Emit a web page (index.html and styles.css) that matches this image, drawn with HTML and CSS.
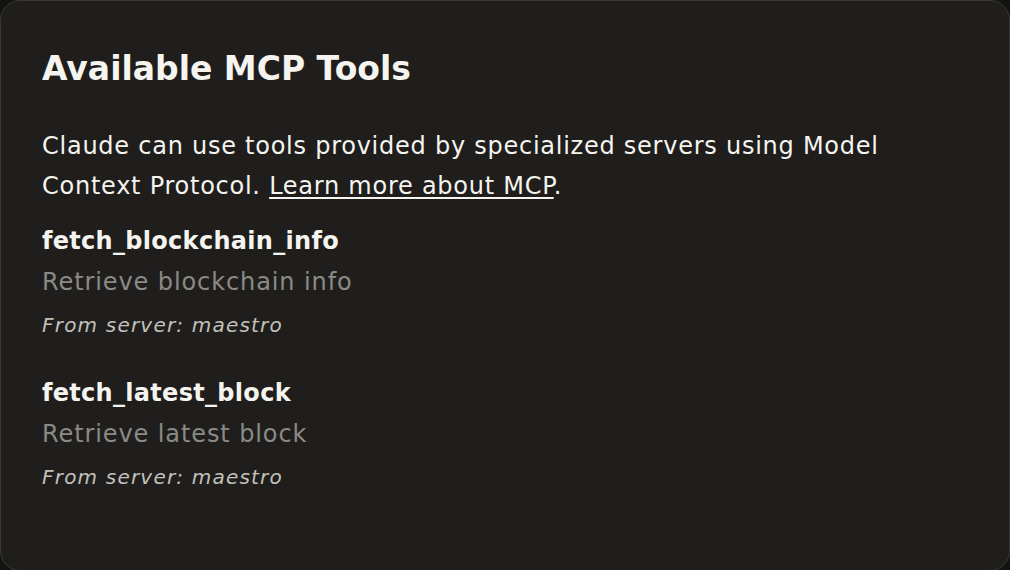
FILE: index.html
```html
<!DOCTYPE html>
<html lang="en">
<head>
    <meta charset="UTF-8">
    <meta name="viewport" content="width=device-width, initial-scale=1.0">
    <title>Available MCP Tools</title>
    <link rel="stylesheet" href="styles.css">
</head>
<body>
    <div class="dialog">
        <h1 class="title">Available MCP Tools</h1>
        <p class="intro">
            Claude can use tools provided by specialized servers using Model
            Context Protocol. <a href="#" class="link">Learn more about MCP</a>.
        </p>

        <ul class="tools">
            <li class="tool">
                <div class="tool-name">fetch_blockchain_info</div>
                <div class="tool-desc">Retrieve blockchain info</div>
                <div class="tool-server">From server: maestro</div>
            </li>
            <li class="tool">
                <div class="tool-name">fetch_latest_block</div>
                <div class="tool-desc">Retrieve latest block</div>
                <div class="tool-server">From server: maestro</div>
            </li>
        </ul>
    </div>
</body>
</html>
```

FILE: styles.css
```css
html, body {
    margin: 0;
    padding: 0;
    height: 100%;
}

body {
    font-family: "DejaVu Sans", "Noto Sans", sans-serif;
    background-color: #131312;
    color: #f5f4ef;
}

.dialog {
    box-sizing: border-box;
    height: 571px;
    padding: 48px 41px 0;
    background-color: #1f1e1d;
    border: 1px solid #3a3936;
    border-radius: 20px;
}

.title {
    margin: 0 0 37px;
    font-size: 33px;
    line-height: 40px;
    font-weight: 700;
}

.intro {
    margin: 0;
    width: 870px;
    font-size: 24px;
    line-height: 40px;
    letter-spacing: 0.75px;
}

.link {
    color: inherit;
    text-decoration: underline;
    text-underline-offset: 3px;
    text-decoration-thickness: 1.5px;
}

.tools {
    list-style: none;
    margin: 18px 0 0;
    padding: 0;
}

.tool {
    margin-bottom: 36px;
}

.tool-name {
    font-size: 24px;
    line-height: 34px;
    font-weight: 700;
    letter-spacing: 0.3px;
}

.tool-desc {
    margin-top: 4px;
    font-size: 24px;
    line-height: 40px;
    letter-spacing: 0.9px;
    color: #8b8a84;
}

.tool-server {
    margin-top: 8px;
    font-size: 20px;
    line-height: 30px;
    font-style: italic;
    letter-spacing: 1.2px;
    color: #c3c1b9;
}
```
